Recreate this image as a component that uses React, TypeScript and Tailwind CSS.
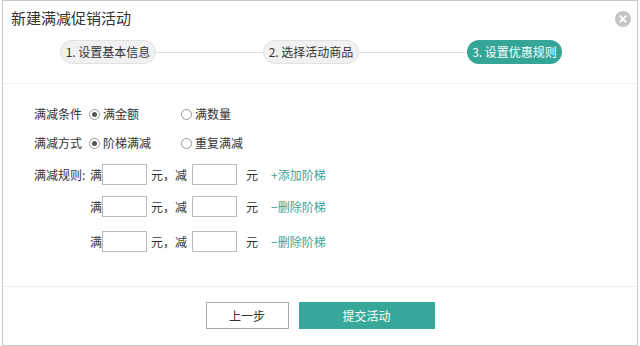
import React from 'react';

const font = { fontFamily: '"Noto Sans CJK SC", "Liberation Sans", sans-serif' };

function Radio({ checked, label }: { checked?: boolean; label: string }) {
  return (
    <div className="flex items-center gap-[3px]">
      <span className="shrink-0 w-[11px] h-[11px] rounded-full border border-[#999] flex items-center justify-center bg-white">
        {checked ? <span className="w-[5px] h-[5px] rounded-full bg-[#555]" /> : null}
      </span>
      <span className="text-[12px] text-[#333]">{label}</span>
    </div>
  );
}

function Step({ label, active }: { label: string; active?: boolean }) {
  return (
    <div
      className={
        active
          ? 'shrink-0 w-[95px] h-[24px] rounded-full bg-[#34a596] text-white text-[12px] flex items-center justify-center'
          : 'shrink-0 w-[96px] h-[24px] rounded-full bg-[#f1f1f1] border border-[#e2e2e2] text-[#333] text-[12px] flex items-center justify-center'
      }
    >
      {label}
    </div>
  );
}

function RuleRow({ label, action }: { label?: string; action: string }) {
  return (
    <div className="flex items-center h-[21px] text-[12px] text-[#333]">
      <span className="shrink-0 w-[56px]">{label}</span>
      <span className="shrink-0 w-[12px]">满</span>
      <span className="shrink-0 w-[45px] h-[21px] border border-[#bbb] bg-white" />
      <span className="shrink-0 ml-[4px] w-[24px]">元，</span>
      <span className="shrink-0 w-[17px]">减</span>
      <span className="shrink-0 w-[45px] h-[21px] border border-[#bbb] bg-white" />
      <span className="shrink-0 ml-[9px] w-[25px]">元</span>
      <span className="text-[#3aa597]">{action}</span>
    </div>
  );
}

export default function App() {
  return (
    <div className="w-[640px] h-[346px] bg-white" style={font}>
      <div className="ml-[2px] w-[636px] h-[346px] border border-[#c9c9c9] flex flex-col">
        <div className="flex items-center justify-between h-[35px] pl-[8px] pr-[6px]">
          <span className="text-[15px] text-[#333]">新建满减促销活动</span>
          <span className="shrink-0 w-[16px] h-[16px] rounded-full bg-[#c4c4c4] flex items-center justify-center">
            <svg width="8" height="8" viewBox="0 0 8 8">
              <path d="M1.2 1.2 L6.8 6.8 M6.8 1.2 L1.2 6.8" stroke="#fff" strokeWidth="1.8" strokeLinecap="round" />
            </svg>
          </span>
        </div>
        <div className="flex items-center h-[32px] pl-[57px]">
          <Step label="1. 设置基本信息" />
          <div className="w-[107px] h-px bg-[#e0e0e0]" />
          <Step label="2. 选择活动商品" />
          <div className="w-[108px] h-px bg-[#e0e0e0]" />
          <Step label="3. 设置优惠规则" active />
        </div>
        <div className="h-px bg-[#efefef] mt-[15px]" />
        <div className="flex-1 pl-[31px] pt-[21px] flex flex-col">
          <div className="flex items-center h-[18px] text-[12px] text-[#333]">
            <span className="w-[55px]">满减条件</span>
            <div className="w-[92px]"><Radio checked label="满金额" /></div>
            <Radio label="满数量" />
          </div>
          <div className="flex items-center h-[18px] mt-[11px] text-[12px] text-[#333]">
            <span className="w-[55px]">满减方式</span>
            <div className="w-[92px]"><Radio checked label="阶梯满减" /></div>
            <Radio label="重复满减" />
          </div>
          <div className="flex flex-col mt-[12px] gap-[11px]">
            <RuleRow label="满减规则:" action="+添加阶梯" />
            <RuleRow action="−删除阶梯" />
            <div className="mt-[3px]"><RuleRow action="−删除阶梯" /></div>
          </div>
        </div>
        <div className="h-px bg-[#efefef]" />
        <div className="h-[58px] flex items-start justify-center pt-[15px] gap-[10px]">
          <button className="w-[83px] h-[27px] border border-[#aaa] bg-white text-[12px] text-[#333]">上一步</button>
          <button className="w-[136px] h-[27px] bg-[#35a899] text-[12px] text-white">提交活动</button>
        </div>
      </div>
    </div>
  );
}
